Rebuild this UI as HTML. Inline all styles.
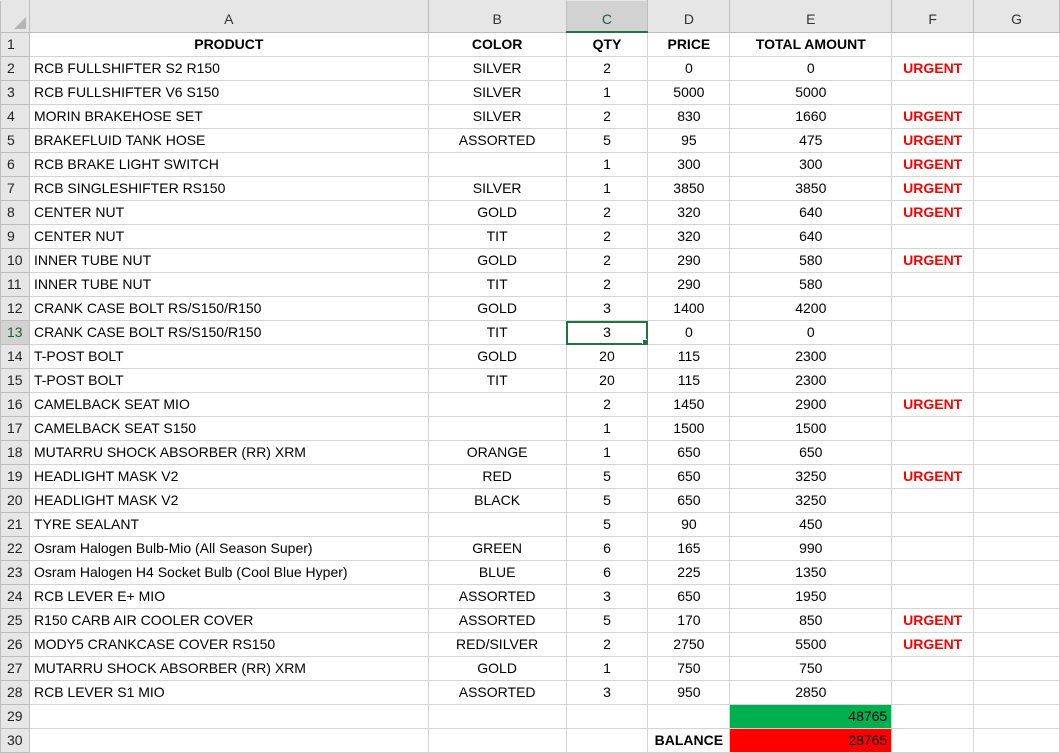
<!DOCTYPE html>
<html><head><meta charset="utf-8"><style>
body{margin:0;background:#fff;font-family:"Liberation Sans",sans-serif;font-size:14px;color:#000;overflow:hidden;width:1060px;height:750px}
table{border-collapse:collapse;table-layout:fixed;position:absolute;left:0;top:0}
td{border:1px solid #d4d4d4;height:23px;padding:0 4px;white-space:nowrap;overflow:hidden;text-align:center;line-height:23px}
td.l{text-align:left}
td.r{text-align:right}
tr.hd td{height:24px;line-height:24px;padding-top:6px;padding-bottom:0;background:#e6e6e6;border-color:#bdbdbd;border-top-color:#e6e6e6;color:#333}
tr.hd td.sel{background:#d2d2d2;border-bottom:2px solid #217346;color:#1e5c38}
td.rn{text-align:left;padding-left:6px;background:#e6e6e6;border-color:#bdbdbd;color:#222}
td.rsel{background:#d2d2d2;color:#1e5c38}
b{font-weight:bold}
.u{color:#ff0000;font-weight:bold}
.cur{outline:2px solid #217346;outline-offset:-2px;position:relative}
.cur:after{content:"";position:absolute;right:-3px;bottom:-3px;width:6px;height:6px;background:#217346;border:1px solid #fff}
</style></head><body>
<table>
<colgroup><col style="width:29px"><col style="width:399px"><col style="width:138px"><col style="width:82px"><col style="width:82px"><col style="width:162px"><col style="width:82px"><col style="width:86px"></colgroup>
<tr class="hd"><td style="position:relative"><div style="position:absolute;right:3px;bottom:3px;width:0;height:0;border-left:12px solid transparent;border-bottom:12px solid #b4b4b4"></div></td><td>A</td><td>B</td><td class="sel">C</td><td>D</td><td>E</td><td>F</td><td>G</td></tr>
<tr><td class="rn">1</td><td><b>PRODUCT</b></td><td><b>COLOR</b></td><td><b>QTY</b></td><td><b>PRICE</b></td><td><b>TOTAL AMOUNT</b></td><td></td><td></td></tr>
<tr><td class="rn">2</td><td class="l">RCB FULLSHIFTER S2 R150</td><td>SILVER</td><td>2</td><td>0</td><td>0</td><td class="u">URGENT</td><td></td></tr>
<tr><td class="rn">3</td><td class="l">RCB FULLSHIFTER V6 S150</td><td>SILVER</td><td>1</td><td>5000</td><td>5000</td><td></td><td></td></tr>
<tr><td class="rn">4</td><td class="l">MORIN BRAKEHOSE SET</td><td>SILVER</td><td>2</td><td>830</td><td>1660</td><td class="u">URGENT</td><td></td></tr>
<tr><td class="rn">5</td><td class="l">BRAKEFLUID TANK HOSE</td><td>ASSORTED</td><td>5</td><td>95</td><td>475</td><td class="u">URGENT</td><td></td></tr>
<tr><td class="rn">6</td><td class="l">RCB BRAKE LIGHT SWITCH</td><td></td><td>1</td><td>300</td><td>300</td><td class="u">URGENT</td><td></td></tr>
<tr><td class="rn">7</td><td class="l">RCB SINGLESHIFTER RS150</td><td>SILVER</td><td>1</td><td>3850</td><td>3850</td><td class="u">URGENT</td><td></td></tr>
<tr><td class="rn">8</td><td class="l">CENTER NUT</td><td>GOLD</td><td>2</td><td>320</td><td>640</td><td class="u">URGENT</td><td></td></tr>
<tr><td class="rn">9</td><td class="l">CENTER NUT</td><td>TIT</td><td>2</td><td>320</td><td>640</td><td></td><td></td></tr>
<tr><td class="rn">10</td><td class="l">INNER TUBE NUT</td><td>GOLD</td><td>2</td><td>290</td><td>580</td><td class="u">URGENT</td><td></td></tr>
<tr><td class="rn">11</td><td class="l">INNER TUBE NUT</td><td>TIT</td><td>2</td><td>290</td><td>580</td><td></td><td></td></tr>
<tr><td class="rn">12</td><td class="l">CRANK CASE BOLT RS/S150/R150</td><td>GOLD</td><td>3</td><td>1400</td><td>4200</td><td></td><td></td></tr>
<tr><td class="rn rsel">13</td><td class="l">CRANK CASE BOLT RS/S150/R150</td><td>TIT</td><td class="cur">3</td><td>0</td><td>0</td><td></td><td></td></tr>
<tr><td class="rn">14</td><td class="l">T-POST BOLT</td><td>GOLD</td><td>20</td><td>115</td><td>2300</td><td></td><td></td></tr>
<tr><td class="rn">15</td><td class="l">T-POST BOLT</td><td>TIT</td><td>20</td><td>115</td><td>2300</td><td></td><td></td></tr>
<tr><td class="rn">16</td><td class="l">CAMELBACK SEAT MIO</td><td></td><td>2</td><td>1450</td><td>2900</td><td class="u">URGENT</td><td></td></tr>
<tr><td class="rn">17</td><td class="l">CAMELBACK SEAT S150</td><td></td><td>1</td><td>1500</td><td>1500</td><td></td><td></td></tr>
<tr><td class="rn">18</td><td class="l">MUTARRU SHOCK ABSORBER (RR) XRM</td><td>ORANGE</td><td>1</td><td>650</td><td>650</td><td></td><td></td></tr>
<tr><td class="rn">19</td><td class="l">HEADLIGHT MASK V2</td><td>RED</td><td>5</td><td>650</td><td>3250</td><td class="u">URGENT</td><td></td></tr>
<tr><td class="rn">20</td><td class="l">HEADLIGHT MASK V2</td><td>BLACK</td><td>5</td><td>650</td><td>3250</td><td></td><td></td></tr>
<tr><td class="rn">21</td><td class="l">TYRE SEALANT</td><td></td><td>5</td><td>90</td><td>450</td><td></td><td></td></tr>
<tr><td class="rn">22</td><td class="l">Osram Halogen Bulb-Mio (All Season Super)</td><td>GREEN</td><td>6</td><td>165</td><td>990</td><td></td><td></td></tr>
<tr><td class="rn">23</td><td class="l">Osram Halogen H4 Socket Bulb (Cool Blue Hyper)</td><td>BLUE</td><td>6</td><td>225</td><td>1350</td><td></td><td></td></tr>
<tr><td class="rn">24</td><td class="l">RCB LEVER E+ MIO</td><td>ASSORTED</td><td>3</td><td>650</td><td>1950</td><td></td><td></td></tr>
<tr><td class="rn">25</td><td class="l">R150 CARB AIR COOLER COVER</td><td>ASSORTED</td><td>5</td><td>170</td><td>850</td><td class="u">URGENT</td><td></td></tr>
<tr><td class="rn">26</td><td class="l">MODY5 CRANKCASE COVER RS150</td><td>RED/SILVER</td><td>2</td><td>2750</td><td>5500</td><td class="u">URGENT</td><td></td></tr>
<tr><td class="rn">27</td><td class="l">MUTARRU SHOCK ABSORBER (RR) XRM</td><td>GOLD</td><td>1</td><td>750</td><td>750</td><td></td><td></td></tr>
<tr><td class="rn">28</td><td class="l">RCB LEVER S1 MIO</td><td>ASSORTED</td><td>3</td><td>950</td><td>2850</td><td></td><td></td></tr>
<tr><td class="rn">29</td><td></td><td></td><td></td><td></td><td class="r" style="background:#00b050">48765</td><td></td><td></td></tr>
<tr><td class="rn">30</td><td></td><td></td><td></td><td><b>BALANCE</b></td><td class="r" style="background:#ff0000">28765</td><td></td><td></td></tr>
</table>
</body></html>
